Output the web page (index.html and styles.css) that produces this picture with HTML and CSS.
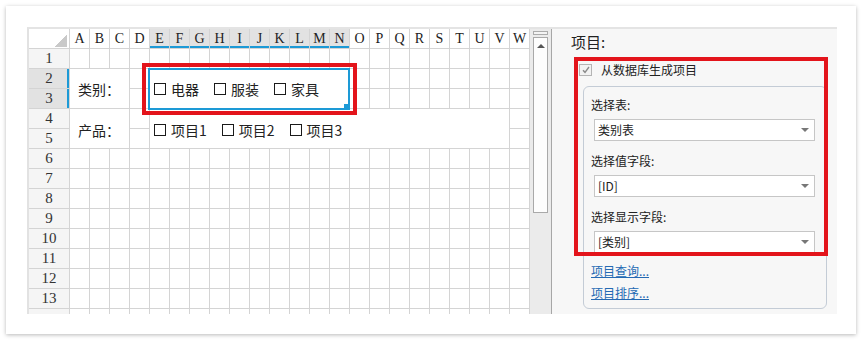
FILE: index.html
```html
<!DOCTYPE html>
<html lang="zh-CN">
<head>
    <meta charset="UTF-8">
    <title>复选框组 - 从数据库生成项目</title>
    <link rel="stylesheet" href="styles.css">
</head>
<body>

    <div class="shot">
        <div class="designer">

            <div class="sheet" id="sheet">
                <div class="merged label-cell area-cat">类别：</div>
                <div class="merged items-cell area-cat-items">
                    <span class="item"><span class="box"></span>电器</span>
                    <span class="item"><span class="box"></span>服装</span>
                    <span class="item"><span class="box"></span>家具</span>
                    <div class="selection"><span class="handle"></span></div>
                    <div class="highlight sheet-highlight"></div>
                </div>
                <div class="merged label-cell area-prod">产品：</div>
                <div class="merged items-cell area-prod-items">
                    <span class="item"><span class="box"></span>项目1</span>
                    <span class="item"><span class="box"></span>项目2</span>
                    <span class="item"><span class="box"></span>项目3</span>
                </div>
            </div>

            <div class="vscroll">
                <div class="splitter"></div>
                <div class="thumb"><span class="arrow-up"></span></div>
            </div>

            <div class="panel">
                <div class="panel-title">项目:</div>
                <div class="check-row">
                    <span class="check">
                        <svg width="8" height="8" viewBox="0 0 8 8"><path d="M1 4.2 L3 6.3 L7 1" fill="none" stroke="#8a8a8a" stroke-width="1.4"/></svg>
                    </span>
                    从数据库生成项目
                </div>
                <div class="group">
                    <div class="field-label">选择表:</div>
                    <div class="select">类别表<span class="caret"></span></div>
                    <div class="field-label">选择值字段:</div>
                    <div class="select">[ID]<span class="caret"></span></div>
                    <div class="field-label">选择显示字段:</div>
                    <div class="select">[类别]<span class="caret"></span></div>
                    <a class="link first-link" href="#">项目查询...</a>
                    <a class="link" href="#">项目排序...</a>
                </div>
                <div class="highlight panel-highlight"></div>
            </div>

        </div>
    </div>

    <script>
        // build the plain 1x1 cells around the merged ones
        const sheet = document.getElementById("sheet");
        const letters = "ABCDEFGHIJKLMNOPQRSTUVW";
        const merges = [
            { r1: 2, r2: 3, c1: 1, c2: 3 },
            { r1: 2, r2: 3, c1: 5, c2: 14 },
            { r1: 4, r2: 5, c1: 1, c2: 3 },
            { r1: 4, r2: 5, c1: 5, c2: 22 }
        ];

        function covered(r, c) {
            return merges.some(m => r >= m.r1 && r <= m.r2 && c >= m.c1 && c <= m.c2);
        }

        for (let r = 0; r <= 14; r++) {
            for (let c = 0; c <= 23; c++) {
                if (covered(r, c)) continue;
                const cell = document.createElement("div");
                cell.className = "cell";
                if (r === 0 && c === 0) {
                    cell.classList.add("corner");
                    cell.innerHTML = '<span class="corner-mark"></span>';
                } else if (r === 0) {
                    cell.classList.add("col-head");
                    if (c >= 5 && c <= 14) cell.classList.add("active");
                    cell.innerText = letters[c - 1];
                } else if (c === 0) {
                    cell.classList.add("row-head");
                    if (r === 2 || r === 3) cell.classList.add("active");
                    // last row is only partly in view, its number is hidden
                    if (r < 14) cell.innerText = r;
                }
                sheet.appendChild(cell);
            }
        }
    </script>

</body>
</html>
```

FILE: styles.css
```css
* { box-sizing: border-box; margin: 0; padding: 0; }
body { background: #ffffff; font-family: "Noto Sans CJK SC", "Noto Sans", sans-serif; color: #222; }

.shot { margin: 6px; width: 850px; height: 328px; background: #fff; box-shadow: 0 1px 4px rgba(0, 0, 0, 0.28); padding: 21px 19px 20px 21px; }
.designer { display: flex; height: 287px; border-top: 2px solid #e4e4e4; border-left: 2px solid #e2e2e2; }

/* spreadsheet */
.sheet { display: grid; grid-template-columns: 41px repeat(23, 20px); grid-template-rows: repeat(15, 20px); width: 501px; height: 285px; overflow: hidden; background: #fff; }
.cell { border-right: 1px solid #d4d4d4; border-bottom: 1px solid #d4d4d4; }
.corner { display: flex; align-items: flex-end; justify-content: flex-end; padding: 0 2px 1px 0; }
.corner-mark { width: 13px; height: 13px; background: linear-gradient(to bottom right, transparent 50%, #c9c9c9 50%); }
.col-head, .row-head { font-family: "Liberation Serif", "DejaVu Serif", serif; font-size: 14px; line-height: 19px; text-align: center; color: #222; }
.row-head { background: #f5f5f5; font-size: 15px; color: #333; }
.col-head.active { background: #e2e2e2; box-shadow: inset 0 -2px 0 #1d9ad6; }
.row-head.active { background: #e2e2e2; box-shadow: inset -2px 0 0 #1d9ad6; }

.merged { position: relative; background: #fff; border-right: 1px solid #d4d4d4; border-bottom: 1px solid #d4d4d4; display: flex; align-items: center; font-size: 14px; }
.area-cat { grid-row: 3 / 5; grid-column: 2 / 5; }
.area-cat-items { grid-row: 3 / 5; grid-column: 6 / 16; z-index: 2; }
.area-prod { grid-row: 5 / 7; grid-column: 2 / 5; padding-top: 2px; }
.area-prod-items { grid-row: 5 / 7; grid-column: 6 / 24; padding-top: 3px; }
.label-cell { padding-left: 8px; }
.items-cell { padding-left: 4px; gap: 15px; }
.item { display: inline-flex; align-items: center; gap: 5px; line-height: 18px; }
.box { width: 12px; height: 12px; border: 1px solid #1a1a1a; }

.selection { position: absolute; left: -2px; top: -1px; right: -1px; bottom: -2px; border: 2px solid #1d9ad6; }
.handle { position: absolute; right: -2px; bottom: -2px; width: 6px; height: 6px; background: #1d9ad6; }

.highlight { position: absolute; border: 4px solid #e3141b; z-index: 3; }
.sheet-highlight { left: -8px; top: -6px; right: -8px; bottom: -7px; }

/* vertical scrollbar */
.vscroll { width: 21px; height: 285px; background: #ebebeb; padding: 2px 2px 0 3px; }
.splitter { width: 15px; height: 4px; border: 1px solid #ababab; background: #f3f3f3; }
.thumb { width: 15px; height: 176px; margin-top: 2px; border: 1px solid #a9a9a9; background: #fdfdfd; display: flex; justify-content: center; padding-top: 6px; }
.arrow-up { width: 0; height: 0; border-left: 4px solid transparent; border-right: 4px solid transparent; border-bottom: 4px solid #555; }

/* property panel */
.panel { position: relative; flex: 1; height: 285px; background: #f7f7f7; border-left: 1px solid #a7a7a7; padding: 4px 0 0 19px; overflow: hidden; }
.panel-title { font-size: 15px; line-height: 18px; color: #222; }
.check-row { display: flex; align-items: center; gap: 9px; margin: 11px 0 0 8px; font-size: 12px; line-height: 16px; color: #222; }
.check { width: 13px; height: 12px; border: 1px solid #b4b4b4; background: #f2f2f2; display: flex; align-items: center; justify-content: center; }
.group { width: 244px; height: 223px; margin: 8px 0 0 12px; border: 1px solid #c4ccd6; border-radius: 6px; padding: 10px 0 0 7px; }
.field-label { font-size: 12px; line-height: 16px; color: #222; margin-top: 12px; }
.field-label:first-child { margin-top: 0; }
.select { position: relative; width: 221px; height: 22px; margin: 5px 0 0 3px; background: #fff; border: 1px solid #c6c6c6; font-size: 12px; line-height: 20px; padding-left: 3px; color: #222; }
.field-label + .select { margin-top: 6px; }
.caret { position: absolute; right: 5px; top: 8px; width: 0; height: 0; border-left: 4px solid transparent; border-right: 4px solid transparent; border-top: 4px solid #777; }
.link { display: block; width: fit-content; font-size: 12px; line-height: 16px; color: #2469b3; margin-top: 6px; }
.first-link { margin-top: 10px; }
.panel-highlight { left: 22px; top: 28px; width: 254px; height: 199px; }
```
